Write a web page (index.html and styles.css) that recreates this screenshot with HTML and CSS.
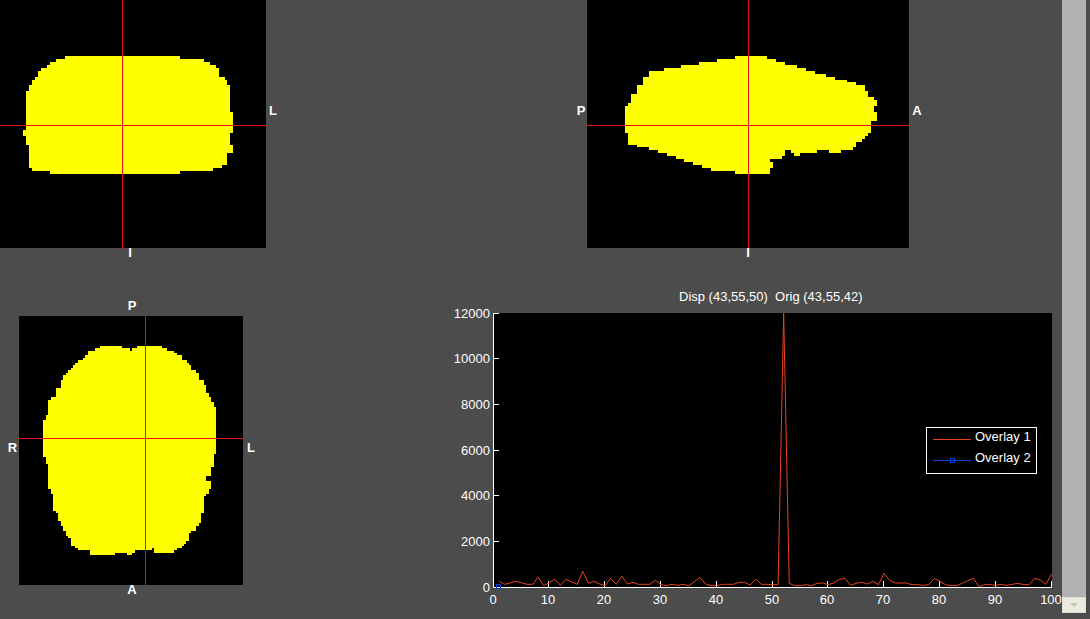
FILE: index.html
```html
<!DOCTYPE html>
<html lang="en">
<head>
<meta charset="utf-8">
<title>Overlay viewer</title>
<link rel="stylesheet" href="styles.css">
</head>
<body>
<main class="workspace">
  <figure class="view view-coronal">
    <svg class="slice" width="266" height="248" viewBox="0 0 266 248" aria-label="Coronal slice">
      <rect class="field" width="266" height="248"/>
      <path class="mask" d="M65 56H180V59H204V62H210V65H216V68H219V77H225V80H227V85H230V112H233V133H230V145H233V153H227V165H222V168H213V171H180V174H50V171H32V168H29V145H26V136H23V130H26V91H29V85H32V80H35V77H38V71H41V68H47V65H50V62H56V59H65Z"/>
      <rect class="cross" x="0" y="125" width="267" height="1"/>
      <rect class="cross" x="122" y="0" width="1" height="249"/>
    </svg>
    <span class="mark right">L</span>
    <span class="mark bottom">I</span>
  </figure>

  <figure class="view view-sagittal">
    <span class="mark left">P</span>
    <svg class="slice" width="322" height="248" viewBox="0 0 322 248" aria-label="Sagittal slice">
      <rect class="field" width="322" height="248"/>
      <path class="mask" d="M38 133V106H41V103H44V94H50V85H56V77H62V71H77V68H94V65H112V62H130V59H148V56H180V59H189V62H198V65H210V68H219V71H228V74H239V77H248V80H260V82H269V85H278V91H281V97H287V100H290V106H287V112H290V121H284V133H281V136H278V139H275V142H269V147H266V150H254V153H242V150H230V153H213V156H207V153H204V150H198V156H195V159H183V162H186V168H183V174H148V171H124V168H115V165H106V162H97V159H89V156H80V153H71V150H62V147H50V145H41V133Z"/>
      <rect class="cross" x="-1" y="125" width="324" height="1"/>
      <rect class="cross" x="161" y="0" width="1" height="249"/>
    </svg>
    <span class="mark right">A</span>
    <span class="mark bottom">I</span>
  </figure>

  <figure class="view view-axial">
    <span class="mark top">P</span>
    <span class="mark left">R</span>
    <svg class="slice" width="224" height="269" viewBox="0 0 224 269" aria-label="Axial slice">
      <rect class="field" width="224" height="269"/>
      <path class="mask" d="M24 104H27V99H29V84H32V81H37V72H42V64H44V59H47V57H49V54H52V52H54V49H56V47H59V44H64V42H66V39H69V35H76V32H81V30H103V32H111V35H113V32H118V30H143V32H148V35H155V37H158V39H163V44H168V47H170V49H172V54H177V57H180V64H185V69H187V77H190V81H192V86H195V91H197V138H195V151H192V160H187V165H192V173H190V178H187V180H185V197H182V207H180V210H177V215H172V217H170V225H167V228H165V230H163V232H158V234H155V237H135V232H133V234H116V237H113V239H108V237H96V239H71V234H59V232H56V230H52V222H49V220H47V215H44V210H42V205H39V197H37V195H34V178H32V173H29V148H27V141H24Z"/>
      <rect class="cross" x="-1" y="122" width="226" height="1"/>
      <rect class="cross" x="126" y="-1" width="1" height="271"/>
    </svg>
    <span class="mark right">L</span>
    <span class="mark bottom">A</span>
  </figure>

  <svg class="chart" viewBox="0 0 622 333" role="img" aria-label="Overlay time course">
    <text class="label" x="239" y="15" xml:space="preserve">Disp (43,55,50)  Orig (43,55,42)</text>
    <g transform="translate(53 27)">
      <rect class="field" width="559" height="275"/>
      <path class="axis" d="M.5 0V274.500H559M0 .5H6M0 45.500H6M0 91.500H6M0 137.500H6M0 182.500H6M0 228.500H6M55.500 274V268M111.500 274V268M167.500 274V268M223.500 274V268M279.500 274V268M334.500 274V268M390.500 274V268M446.500 274V268M502.500 274V268M558.500 274V268"/>
      <g transform="translate(.5 187) scale(5.58 .3333)">
        <polyline class="series-1" points="1,244 2,253 3,249 4,244 5,248 6,253 7,253 8,232 9,257 10,248 11,238 12,256 13,238 14,246 15,253 16,214 17,250 18,244 19,252 20,257 21,235 22,253 23,229 24,252 25,247 26,253 27,253 28,253 29,241 30,254 31,257 32,253 33,256 34,253 35,257 36,245 37,232 38,252 39,257 40,257 41,253 42,253 43,253 44,247 45,247 46,255 47,238 48,253 49,253 50,254 51,254 52,-560 53,250 54,257 55,257 56,254 57,257 58,250 59,249 60,254 61,249 62,238 63,235 64,256 65,250 66,247 67,252 68,244 69,254 70,220 71,241 72,249 73,249 74,249 75,254 76,254 77,256 78,254 79,235 80,244 81,254 82,257 83,257 84,250 85,242 86,235 87,260 88,254 89,254 90,256 91,253 92,256 93,253 94,250 95,254 96,254 97,235 98,240 99,253 100,222"/>
      </g>
      <rect class="series-2" x="3.500" y="271.500" width="4" height="4"/>
      <g class="label end">
        <text x="-3" y="5">12000</text>
        <text x="-3" y="50">10000</text>
        <text x="-3" y="96">8000</text>
        <text x="-3" y="142">6000</text>
        <text x="-3" y="187">4000</text>
        <text x="-3" y="233">2000</text>
        <text x="-3" y="279">0</text>
      </g>
      <g class="label middle">
        <text x="0" y="291">0</text>
        <text x="55" y="291">10</text>
        <text x="111" y="291">20</text>
        <text x="167" y="291">30</text>
        <text x="223" y="291">40</text>
        <text x="279" y="291">50</text>
        <text x="334" y="291">60</text>
        <text x="390" y="291">70</text>
        <text x="446" y="291">80</text>
        <text x="502" y="291">90</text>
        <text x="558" y="291">100</text>
      </g>
      <g>
        <rect class="legend" x="433.500" y="114.500" width="110" height="46"/>
        <path class="series-1" d="M440 126.500H478"/>
        <text class="label" x="482" y="128">Overlay 1</text>
        <path class="series-2" d="M440 147.500H478"/>
        <rect class="series-2" x="457.500" y="145.500" width="4" height="4"/>
        <text class="label" x="482" y="149">Overlay 2</text>
      </g>
    </g>
  </svg>
</main>
<aside class="scrollbar">
  <button class="scroll-down" type="button" aria-label="Scroll down">
    <svg width="8" height="4" viewBox="0 0 8 4"><path d="M0 0H8L4 4Z" fill="#c4c4b0"/></svg>
  </button>
</aside>
</body>
</html>
```
FILE: styles.css
```css
* {
  box-sizing: border-box;
}

body {
  margin: 0;
  min-height: 100vh;
  display: flex;
  overflow: hidden;
  background: #4c4c4c;
  color: #fff;
  font-family: "Liberation Sans", Arial, sans-serif;
}

.workspace {
  flex: 1;
  min-width: 0;
  display: grid;
  grid-template-columns: 440px minmax(0, 1fr);
  align-content: start;
  row-gap: 28px;
}

.view {
  margin: 0;
  display: grid;
  grid-template-areas:
    ". top ."
    "left slice right"
    ". bottom .";
  justify-content: start;
  align-content: start;
  align-items: center;
}

.view-coronal {
  grid-template-columns: 0 auto 14px;
}

.view-sagittal {
  grid-template-columns: 12px auto 16px;
  justify-content: center;
  padding-right: 2px;
}

.view-axial {
  grid-template-columns: 19px auto 16px;
  padding-top: 15px;
}

.slice {
  grid-area: slice;
  display: block;
  overflow: visible;
}

.mark {
  font-size: 13px;
  font-weight: bold;
  line-height: 10px;
  text-align: center;
}

.top {
  grid-area: top;
  margin-bottom: 5px;
}

.left {
  grid-area: left;
}

.right {
  grid-area: right;
}

.bottom {
  grid-area: bottom;
}

.view-coronal .bottom {
  padding-right: 6px;
}

.view-coronal .right,
.view-sagittal .left,
.view-sagittal .right {
  padding-bottom: 26px;
}

.view-axial .left,
.view-axial .right {
  padding-bottom: 6px;
}

.view-axial .left {
  padding-left: 6px;
}

.view-axial .top,
.view-axial .bottom {
  padding-left: 2px;
}

.chart {
  display: block;
  width: 100%;
  height: auto;
}

.field {
  fill: #000;
}

.mask {
  fill: #ff0;
  shape-rendering: crispEdges;
}

.cross {
  fill: #e01010;
  shape-rendering: crispEdges;
}

.axis,
.legend {
  fill: none;
  stroke: #fff;
}

.series-1 {
  fill: none;
  stroke: #e8421e;
  vector-effect: non-scaling-stroke;
}

.series-2 {
  fill: none;
  stroke: #0a46dc;
}

.label {
  fill: #fff;
  font-size: 13px;
}

.end {
  text-anchor: end;
}

.middle {
  text-anchor: middle;
}

.scrollbar {
  width: 24px;
  margin: 0 4px 6px 0;
  display: flex;
  flex-direction: column;
  justify-content: flex-end;
  background: #b2b2b2;
}

.scroll-down {
  height: 16px;
  padding: 0;
  border: 1px solid #deded2;
  display: flex;
  align-items: center;
  justify-content: center;
  background: #ecebe0;
}
```
